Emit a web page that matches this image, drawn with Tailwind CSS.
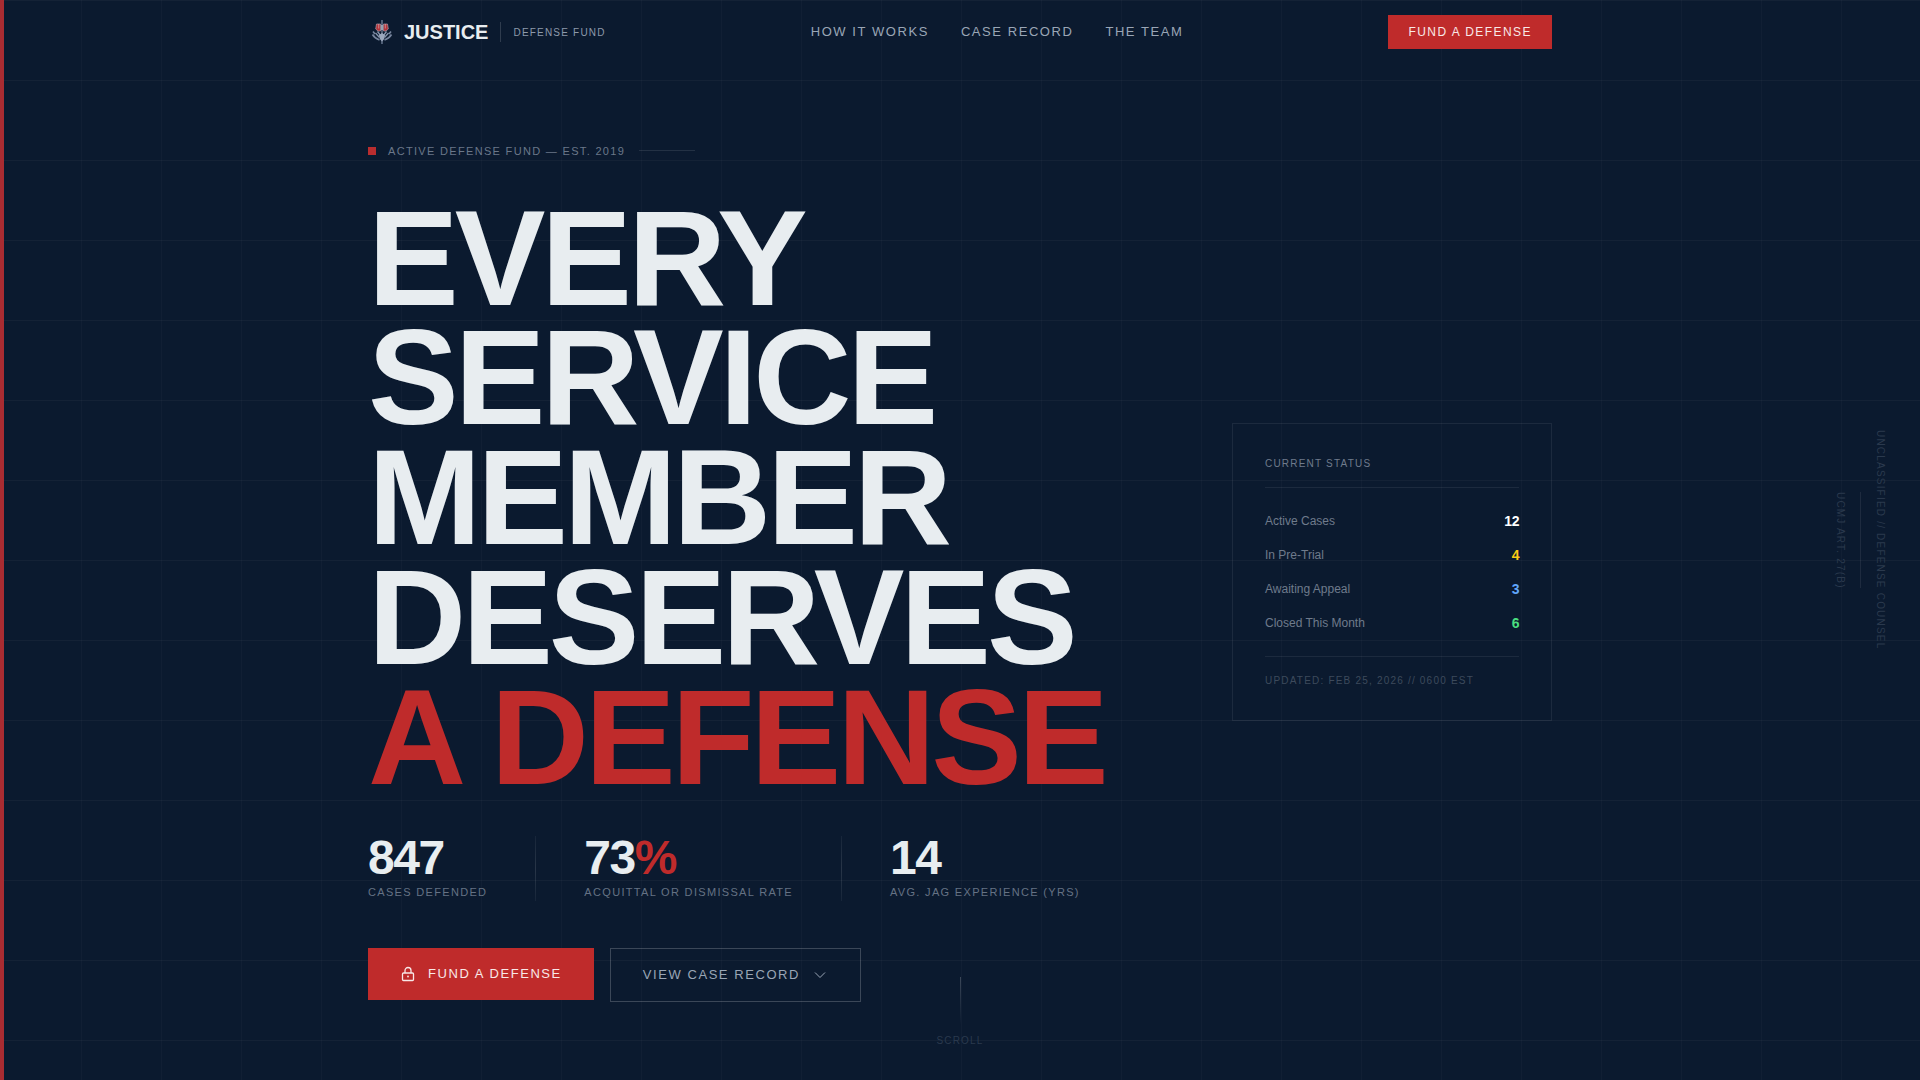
<!DOCTYPE html>
<html lang="en">
<head>
  <meta charset="UTF-8"/>
  <meta name="viewport" content="width=device-width, initial-scale=1.0"/>
  <title>Justice Defense Fund</title>
  <script src="https://cdn.jsdelivr.net/npm/@tailwindcss/browser@4"></script>
</head>
<body class="relative flex min-h-screen flex-col overflow-x-hidden border-l-4 border-[#a92c32] bg-[#0b1a2f] font-['Liberation_Sans',Arial,sans-serif] text-[#e8edf0]">

  <!-- Background grid -->
  <div class="pointer-events-none absolute inset-y-0 left-0 right-0 bg-[linear-gradient(rgba(255,255,255,0.035)_1px,transparent_1px),linear-gradient(90deg,rgba(255,255,255,0.025)_1px,transparent_1px)] bg-[size:80px_80px] bg-position-[77px_0px]"></div>

  <header class="relative -ml-1 border-b border-transparent">
    <div class="mx-auto flex h-16 w-full max-w-7xl items-center justify-between px-12">
      <a href="#" class="flex items-center">
        <svg class="mr-2 size-7" viewBox="0 0 28 28" fill="none" aria-hidden="true">
          <path d="M5 13.500l2 2.500M23 13.500l-2 2.500M4.500 16.500c1.500 2.500 4 4.500 7 5.500M23.500 16.500c-1.500 2.500-4 4.500-7 5.500" stroke="#76849d" stroke-width="1.600"/>
          <path d="M7.500 15l4 4.500M20.500 15l-4 4.500M9.500 13.500l3 4M18.500 13.500l-3 4" stroke="#8694ac" stroke-width="1.300"/>
          <path d="M8.500 6h4v7h-2.500l-2.300-2zM19.500 6h-4v7h2.500l2.300-2z" fill="#b5343a" stroke="#a99aa8" stroke-width=".7"/>
          <path d="M10.700 6v4.500M17.300 6v4.500" stroke="#d8b9bd" stroke-width=".6"/>
          <path d="M14 2v24" stroke="#75839c" stroke-width="1.300"/>
          <path d="M11 17l3-2 3 2-.8 4-2.200 2.500-2.200-2.500z" fill="#9ba8bd"/>
          <path d="M14 7v5" stroke="#dfe5ec" stroke-width="1"/>
        </svg>
        <span class="text-[20px] leading-6 font-bold">JUSTICE</span>
        <span class="mx-3 h-5 w-px bg-white/15"></span>
        <span class="text-[10px] leading-[15px] tracking-[0.12em] text-[#8d99ab]">DEFENSE FUND</span>
      </a>
      <nav class="flex items-center gap-8 text-[13px] leading-5 tracking-[0.12em] text-[#9aa6b6]">
        <a href="#how" class="hover:text-white">HOW IT WORKS</a>
        <a href="#record" class="hover:text-white">CASE RECORD</a>
        <a href="#team" class="hover:text-white">THE TEAM</a>
      </nav>
      <button type="button" class="bg-[#bf2b2b] px-5 py-2 text-[12px] leading-[18px] tracking-[0.12em] text-[#f8e8e8] hover:bg-[#a92c32]">FUND A DEFENSE</button>
    </div>
  </header>

  <main class="relative -ml-1 flex flex-1 items-center">
    <div class="mx-auto grid w-full max-w-7xl grid-cols-[1fr_320px] items-center px-12">

      <section>
        <div class="mb-10 flex items-center">
          <span class="mr-3 size-2 bg-[#b92d2f]"></span>
          <p class="mr-3.5 text-[11px] leading-4 tracking-[0.12em] text-[#6a7789]">ACTIVE DEFENSE FUND — EST. 2019</p>
          <span class="h-px w-14 bg-white/10"></span>
        </div>

        <h1 class="mb-[39px] text-[136px] leading-[0.88] font-bold tracking-[-0.03em] whitespace-nowrap">
          <span class="block">EVERY</span>
          <span class="block">SERVICE</span>
          <span class="block">MEMBER</span>
          <span class="block">DESERVES</span>
          <span class="block text-[#bf2b2b]">A DEFENSE</span>
        </h1>

        <div class="mb-[47px] flex gap-12 whitespace-nowrap">
          <div>
            <p class="text-[48px] leading-[43px] font-bold tracking-[-0.03em]">847</p>
            <p class="mt-[5px] text-[11px] leading-[17px] tracking-[0.12em] text-[#657284]">CASES DEFENDED</p>
          </div>
          <span class="w-px bg-linear-to-b from-white/5 via-white/12 to-white/5"></span>
          <div>
            <p class="text-[48px] leading-[43px] font-bold tracking-[-0.03em]">73<span class="text-[#bf2b2b]">%</span></p>
            <p class="mt-[5px] text-[11px] leading-[17px] tracking-[0.12em] text-[#657284]">ACQUITTAL OR DISMISSAL RATE</p>
          </div>
          <span class="w-px bg-linear-to-b from-white/5 via-white/12 to-white/5"></span>
          <div>
            <p class="text-[48px] leading-[43px] font-bold tracking-[-0.03em]">14</p>
            <p class="mt-[5px] text-[11px] leading-[17px] tracking-[0.12em] text-[#657284]">AVG. JAG EXPERIENCE (YRS)</p>
          </div>
        </div>

        <div class="flex items-start gap-4 text-[13px] leading-5 tracking-[0.12em]">
          <button type="button" class="flex items-center gap-3 bg-[#bf2b2b] px-8 py-4 text-[#f8e8e8] hover:bg-[#a92c32]">
            <svg class="size-4" viewBox="0 0 16 16" fill="none" stroke="currentColor" stroke-width="1.300" aria-hidden="true">
              <rect x="2.500" y="7" width="11" height="7.500" rx="1"/>
              <path d="M5 7V4.500a3 3 0 0 1 6 0V7"/>
              <circle cx="8" cy="10.500" r=".9" fill="currentColor" stroke="none"/>
            </svg>
            FUND A DEFENSE
          </button>
          <button type="button" class="flex items-center gap-3 border border-white/20 px-8 py-4 text-[#9aa6b6] hover:text-white">
            VIEW CASE RECORD
            <svg class="size-4" viewBox="0 0 16 16" fill="none" stroke="currentColor" aria-hidden="true">
              <path d="M3 5.500l5 5 5-5"/>
            </svg>
          </button>
        </div>
      </section>

      <aside class="border border-white/7 p-8">
        <h2 class="mb-6 border-b border-white/7 pb-4 text-[10px] leading-[15px] tracking-[0.12em] text-[#6f7b8c]">CURRENT STATUS</h2>
        <dl class="space-y-4 text-[12px] leading-[18px] text-[#6f7b8c]">
          <div class="flex justify-between">
            <dt>Active Cases</dt>
            <dd class="text-[14px] font-bold tracking-[-0.03em] text-white">12</dd>
          </div>
          <div class="flex justify-between">
            <dt>In Pre-Trial</dt>
            <dd class="text-[14px] font-bold tracking-[-0.03em] text-[#facc15]">4</dd>
          </div>
          <div class="flex justify-between">
            <dt>Awaiting Appeal</dt>
            <dd class="text-[14px] font-bold tracking-[-0.03em] text-[#60a5fa]">3</dd>
          </div>
          <div class="flex justify-between">
            <dt>Closed This Month</dt>
            <dd class="text-[14px] font-bold tracking-[-0.03em] text-[#4ade80]">6</dd>
          </div>
        </dl>
        <p class="mt-6 border-t border-white/7 pt-4 text-[10px] leading-[15px] tracking-[0.12em] text-[#3d4a5c]">UPDATED: FEB 25, 2026 // 0600 EST</p>
      </aside>
    </div>
  </main>

  <!-- Classification strip on the right edge -->
  <div class="absolute inset-y-0 right-8 flex flex-row-reverse items-center gap-3 text-[10px] leading-[15px] tracking-[0.12em] text-[#2a394d]">
    <span class="[writing-mode:vertical-rl]">UNCLASSIFIED // DEFENSE COUNSEL</span>
    <span class="h-24 w-px bg-white/8"></span>
    <span class="[writing-mode:vertical-rl]">UCMJ ART. 27(B)</span>
  </div>

  <!-- Scroll hint -->
  <div class="absolute -left-1 right-0 bottom-8 flex flex-col items-center gap-2">
    <span class="h-12 w-px bg-linear-to-b from-white/20 to-transparent"></span>
    <span class="text-[10px] leading-[15px] tracking-[0.12em] text-[#2a394d]">SCROLL</span>
  </div>

</body>
</html>
